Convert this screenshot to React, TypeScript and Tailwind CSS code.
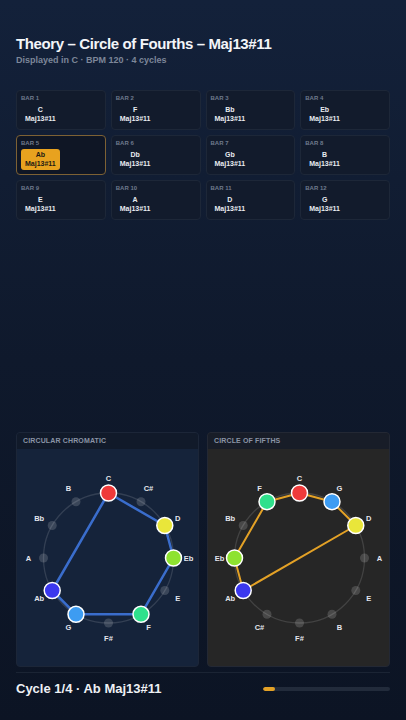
import React from 'react';

const CHROMATIC = ['C', 'C#', 'D', 'Eb', 'E', 'F', 'F#', 'G', 'Ab', 'A', 'Bb', 'B'];
const FIFTHS = ['C', 'G', 'D', 'A', 'E', 'B', 'F#', 'C#', 'Ab', 'Eb', 'Bb', 'F'];

// chord tones shown for Ab Maj13#11
const ACTIVE: Record<string, string> = {
  C: '#ef3a3a',
  D: '#e9e63a',
  Eb: '#8ee22f',
  F: '#2fe08c',
  G: '#3d9cf2',
  Ab: '#3b38ee',
};

const BARS = [
  { n: 1, root: 'C' },
  { n: 2, root: 'F' },
  { n: 3, root: 'Bb' },
  { n: 4, root: 'Eb' },
  { n: 5, root: 'Ab' },
  { n: 6, root: 'Db' },
  { n: 7, root: 'Gb' },
  { n: 8, root: 'B' },
  { n: 9, root: 'E' },
  { n: 10, root: 'A' },
  { n: 11, root: 'D' },
  { n: 12, root: 'G' },
];

function Wheel({ notes, line, lineWidth }: { notes: string[]; line: string; lineWidth: number }) {
  const cx = 91.5;
  const cy = 109;
  const r = 65;
  const lr = 80;
  const pos = (i: number, rad: number) => {
    const a = (i * 30 * Math.PI) / 180;
    return { x: cx + rad * Math.sin(a), y: cy - rad * Math.cos(a) };
  };
  const active = notes.map((n, i) => ({ n, i })).filter((o) => ACTIVE[o.n]);
  const pts = active.map((o) => pos(o.i, r));
  const poly = pts.map((p) => `${p.x.toFixed(1)},${p.y.toFixed(1)}`).join(' ');

  return (
    <svg width="183" height="217" viewBox="0 0 183 217" className="block">
      <circle cx={cx} cy={cy} r={r} fill="none" stroke="rgba(255,255,255,0.13)" strokeWidth="1.3" />
      <polygon points={poly} fill="none" stroke={line} strokeWidth={lineWidth} strokeLinejoin="round" />
      {notes.map((n, i) => {
        const p = pos(i, r);
        const l = pos(i, lr);
        const c = ACTIVE[n];
        return (
          <g key={n}>
            {c ? (
              <circle cx={p.x} cy={p.y} r="8" fill={c} stroke="#ffffff" strokeWidth="1.5" />
            ) : (
              <circle cx={p.x} cy={p.y} r="4.5" fill="rgba(255,255,255,0.16)" />
            )}
            <text
              x={l.x}
              y={l.y}
              textAnchor="middle"
              dominantBaseline="central"
              fontSize="7.5"
              fontWeight="700"
              fill="#e4e7ee"
              fontFamily="'Liberation Sans', Arial, sans-serif"
            >
              {n}
            </text>
          </g>
        );
      })}
    </svg>
  );
}

export default function App() {
  return (
    <div
      className="flex h-[720px] w-[406px] flex-col overflow-hidden bg-gradient-to-b from-[#13213a] via-[#0f192c] to-[#0c1424] text-white"
      style={{ fontFamily: "'Liberation Sans', Arial, sans-serif" }}
    >
      {/* Header */}
      <div className="px-4 pt-[35px]">
        <h1 className="text-[15px] font-bold leading-[18px] tracking-tight text-[#f3f5f8]">
          Theory – Circle of Fourths – Maj13#11
        </h1>
        <p className="mt-[1px] text-[9px] font-bold leading-[12px] text-[#7d8799]">
          Displayed in C · BPM 120 · 4 cycles
        </p>
      </div>

      {/* Bars */}
      <div className="mt-[24px] grid grid-cols-4 gap-[5px] px-4">
        {BARS.map((b) => {
          const on = b.n === 5;
          return (
            <div
              key={b.n}
              className={
                on
                  ? 'flex h-[40px] flex-col items-start rounded-[4px] border border-[#7d6134] bg-[#0f1625] px-[4px] pt-[3px]'
                  : 'flex h-[40px] flex-col items-start rounded-[4px] border border-[#1d2738] bg-[#121b2c] px-[4px] pt-[3px]'
              }
            >
              <div className="text-[6px] font-bold leading-[8px] text-[#6f7a8c]">BAR {b.n}</div>
              <div
                className={
                  on
                    ? 'mt-[2px] flex flex-col items-center rounded-[3px] bg-[#e8a21f] px-[4px] py-[2px] text-[#1c1a14]'
                    : 'mt-[2px] flex flex-col items-center rounded-[3px] px-[4px] py-[2px] text-[#e9ecf1]'
                }
              >
                <span className="text-[7px] font-bold leading-[8.5px]">{b.root}</span>
                <span className="text-[7px] font-bold leading-[8.5px]">Maj13#11</span>
              </div>
            </div>
          );
        })}
      </div>

      <div className="flex-1" />

      {/* Wheels */}
      <div className="flex gap-[8px] px-4">
        <div className="w-[183px] overflow-hidden rounded-[4px] border border-[#1c2638] bg-[#15233a]">
          <div className="flex h-[16px] items-center bg-[#111a2a] px-[6px] text-[7px] font-bold tracking-[0.02em] text-[#8a93a5]">
            CIRCULAR CHROMATIC
          </div>
          <Wheel notes={CHROMATIC} line="#3a6dcc" lineWidth={2.5} />
        </div>
        <div className="w-[183px] overflow-hidden rounded-[4px] border border-[#232834] bg-[#262626]">
          <div className="flex h-[16px] items-center bg-[#181d28] px-[6px] text-[7px] font-bold tracking-[0.02em] text-[#8a93a5]">
            CIRCLE OF FIFTHS
          </div>
          <Wheel notes={FIFTHS} line="#e3a126" lineWidth={2} />
        </div>
      </div>

      {/* Footer */}
      <div className="mx-4 mt-[5px] flex items-center justify-between border-t border-[#1b2434] pb-[23px] pt-[8px]">
        <span className="text-[13px] font-bold leading-[16px] text-[#eef0f4]">Cycle 1/4 · Ab Maj13#11</span>
        <div className="h-[4px] w-[127px] overflow-hidden rounded-full bg-[#222b3b]">
          <div className="h-full rounded-full bg-[#e3a126]" style={{ width: '9.5%' }} />
        </div>
      </div>
    </div>
  );
}
